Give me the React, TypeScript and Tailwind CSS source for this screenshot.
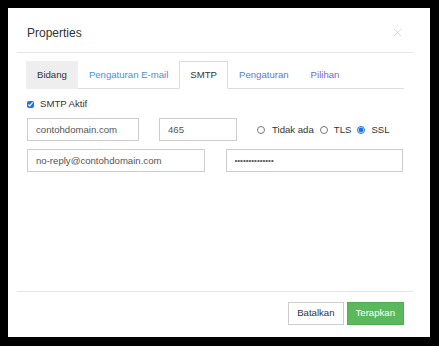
import { X } from 'lucide-react';

const tabs = [
  { label: 'Bidang', cls: 'bg-[#eeeeee] text-[#333] border-transparent' },
  { label: 'Pengaturan E-mail', cls: 'text-[#4f8fd0] border-transparent' },
  { label: 'SMTP', cls: 'text-[#333] bg-white border-[#dddddd] border-b-white' },
  { label: 'Pengaturan', cls: 'text-[#5f7bc9] border-transparent' },
  { label: 'Pilihan', cls: 'text-[#7669c6] border-transparent' },
];

export default function App() {
  return (
    <div
      className="w-[439px] h-[346px] bg-black pl-[8px] pt-[8px]"
      style={{ fontFamily: '"Liberation Sans", Arial, sans-serif' }}
    >
      <div className="w-[422px] h-[329px] bg-white pl-[9px] pr-[17px] flex flex-col">
        {/* Header */}
        <div className="h-[45px] flex items-center justify-between pl-[10px] pr-[9px] border-b border-[#e5e5e5] shrink-0">
          <h1 className="text-[12px] text-[#333] pt-[6px]">Properties</h1>
          <X size={13} strokeWidth={1.2} className="text-[#c8c8c8] mt-[5px]" />
        </div>

        {/* Body */}
        <div className="flex-1 px-[9px] pt-[8px]">
          <div className="flex h-[28px] border-b border-[#dddddd]">
            {tabs.map((t) => (
              <div
                key={t.label}
                className={`h-[28px] px-[10px] flex items-center text-[9.6px] border border-solid ${t.cls}`}
              >
                {t.label}
              </div>
            ))}
          </div>

          <label className="flex items-center gap-[6px] mt-[8px] text-[9.6px] text-[#333] pl-[1px]">
            <input type="checkbox" defaultChecked className="w-[7px] h-[7px] m-0 accent-[#1a73e8]" />
            SMTP Aktif
          </label>

          <div className="flex items-center mt-[7px] pl-[1px]">
            <input
              defaultValue="contohdomain.com"
              className="w-[112px] h-[23px] border border-[#cccccc] px-[8px] text-[9.6px] text-[#555] outline-none"
            />
            <input
              defaultValue="465"
              className="w-[78px] h-[23px] ml-[20px] border border-[#cccccc] px-[8px] text-[9.6px] text-[#555] outline-none"
            />
            <div className="flex items-center ml-[20px] text-[9.6px] text-[#333]">
              <input type="radio" name="sec" className="w-[8px] h-[8px] m-0" />
              <span className="ml-[7px]">Tidak ada</span>
              <input type="radio" name="sec" className="w-[8px] h-[8px] m-0 ml-[6px]" />
              <span className="ml-[6px]">TLS</span>
              <input type="radio" name="sec" defaultChecked className="w-[8px] h-[8px] m-0 ml-[6px] accent-[#1a73e8]" />
              <span className="ml-[6px]">SSL</span>
            </div>
          </div>

          <div className="grid grid-cols-2 gap-[21px] mt-[8px] pl-[1px] pr-[1px]">
            <input
              defaultValue="no-reply@contohdomain.com"
              className="h-[23px] border border-[#cccccc] px-[8px] text-[9.6px] text-[#555] outline-none"
            />
            <input
              type="password"
              defaultValue="passwordsmtp12"
              className="h-[23px] border border-[#cccccc] px-[8px] text-[8px] text-[#555] outline-none"
            />
          </div>
        </div>

        {/* Footer */}
        <div className="h-[46px] border-t border-[#e5e5e5] flex items-start justify-end gap-[3px] pr-[9px] pt-[10px] shrink-0">
          <button className="h-[23px] px-[8px] border border-[#cccccc] bg-white text-[#333] text-[9.6px]">
            Batalkan
          </button>
          <button className="h-[23px] px-[8px] border border-[#4cae4c] bg-[#5cb85c] text-white text-[9.6px]">
            Terapkan
          </button>
        </div>
      </div>
    </div>
  );
}
